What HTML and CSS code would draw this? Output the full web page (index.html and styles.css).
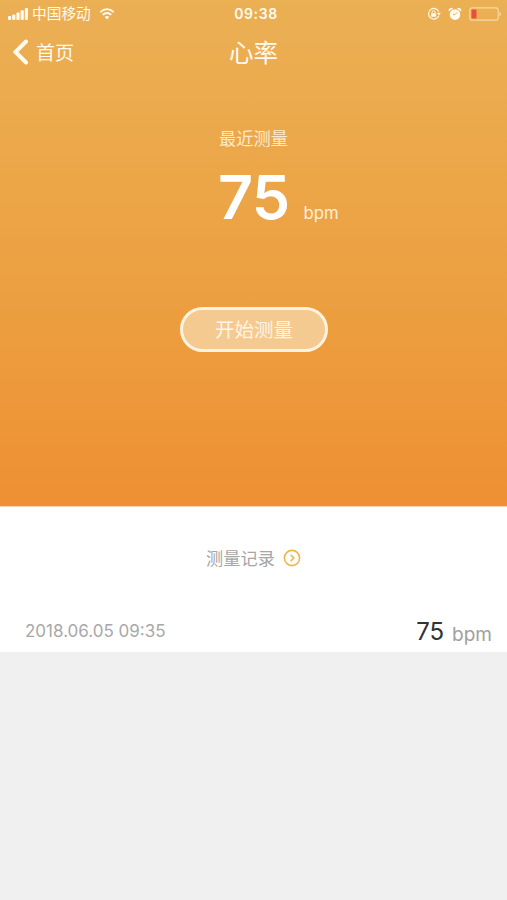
FILE: index.html
```html
<!DOCTYPE html>
<html lang="zh-CN">
<head>
<meta charset="utf-8">
<meta name="viewport" content="width=device-width, initial-scale=1">
<title>心率</title>
<link rel="stylesheet" href="styles.css">
</head>
<body>
<section class="hero">
  <div class="status">
    <div class="status-left">
      <svg class="signal" width="20" height="12" viewBox="0 0 20 12" fill="currentColor"><rect x="0" y="8" width="3.2" height="4" rx="1"/><rect x="4.2" y="6.5" width="3.2" height="5.5" rx="1"/><rect x="8.4" y="4.5" width="3.2" height="7.5" rx="1"/><rect x="12.6" y="2.2" width="3.2" height="9.8" rx="1"/><rect x="16.8" y="0" width="3.2" height="12" rx="1"/></svg>
      <span class="carrier">中国移动</span>
      <svg class="wifi" width="16" height="12" viewBox="0 0 16 12" fill="none" stroke="currentColor"><path d="M1.2 4.1Q8-1.8 14.8 4.1" stroke-width="1.7"/><path d="M3.7 6.8Q8 3.1 12.3 6.8" stroke-width="1.8"/><path d="M5.7 9Q8 7.1 10.3 9L8 11.4Z" fill="currentColor" stroke="none"/></svg>
    </div>
    <span class="clock">09:38</span>
    <div class="status-right">
      <svg width="14" height="14" viewBox="0 0 14 14" fill="none" stroke="currentColor"><path d="M11.8 8.7A5.3 5.3 0 1 1 11.7 4.6" stroke-width="1.2"/><path d="M9.8 5.8h4L12 8.4z" fill="currentColor" stroke="none"/><rect x="4.1" y="6.2" width="5" height="3.6" rx=".5" fill="currentColor" stroke="none"/><path d="M5.1 6.3V5.2a1.5 1.5 0 0 1 3 0v1.1"/></svg>
      <svg width="14" height="14" viewBox="0 0 14 14" fill="none"><path d="M1.3 4A2.5 2.5 0 0 1 4.6 1.7M9.4 1.7A2.5 2.5 0 0 1 12.7 4" stroke="currentColor" stroke-width="1.7"/><circle cx="7" cy="7.6" r="5.3" fill="currentColor"/><path d="M9.2 5.4L7 7.6H5" stroke="#eaad52"/></svg>
      <svg class="battery" width="33" height="14" viewBox="0 0 33 14"><rect x=".8" y=".8" width="28.4" height="12.4" rx="2.5" fill="none" stroke="#f8d7a4" stroke-width="1.2"/><rect x="2.5" y="2.5" width="5" height="9" fill="#e9503b"/><path d="M30.4 4.7q1.7.7 1.7 2.3t-1.7 2.3z" fill="#f8d7a4"/></svg>
    </div>
  </div>
  <nav class="nav">
    <div class="back">
      <svg width="17" height="26" viewBox="0 0 17 26" fill="none" stroke="currentColor" stroke-width="4" stroke-linecap="round"><path d="M14 2.5L3.5 13L14 23.5"/></svg>
      <span>首页</span>
    </div>
    <h1 class="title">心率</h1>
  </nav>
  <p class="label">最近测量</p>
  <div class="reading"><span class="value">75</span><span class="unit">bpm</span></div>
  <button class="start">开始测量</button>
</section>
<section class="records">
  <div class="records-head">
    <span>测量记录</span>
    <svg width="18" height="18" viewBox="0 0 18 18" fill="none" stroke="#efb64f" stroke-width="1.6"><circle cx="9" cy="9" r="7.6"/><path d="M7.7 5.9L10.8 9L7.7 12.1"/></svg>
  </div>
  <div class="record">
    <span class="date">2018.06.05 09:35</span>
    <span class="bpm">75</span>
    <span class="bpm-unit">bpm</span>
  </div>
</section>
</body>
</html>
```

FILE: styles.css
```css
* { box-sizing: border-box; }
body {
  margin: 0;
  min-height: 900px;
  background: #f0f0f0;
  font-family: Inter, "Noto Sans CJK SC", sans-serif;
}
svg { display: block; flex: none; }
.hero {
  height: 507px;
  background: linear-gradient(#ebb054, #ec9f40 60%, #ee9033);
  border-bottom: 1px solid #f8d9b4;
  color: #fffaf0;
  display: flex;
  flex-direction: column;
  align-items: center;
}
.status {
  width: 100%;
  height: 28px;
  padding: 0 5px 0 8px;
  display: grid;
  grid-template-columns: 1fr auto 1fr;
  align-items: center;
}
.status-left, .status-right { display: flex; align-items: center; }
.status-right { justify-content: flex-end; gap: 7px; }
.carrier { font-size: 14.7px; line-height: 28px; margin: 0 8px 0 4px; }
.clock { font-size: 14px; font-weight: 600; letter-spacing: .6px; line-height: 28px; padding-left: 2px; }
.nav {
  width: 100%;
  height: 48px;
  padding: 0 12px;
  display: grid;
  grid-template-columns: 1fr auto 1fr;
  align-items: center;
}
.back { display: flex; align-items: center; gap: 7px; font-size: 19px; line-height: 28px; }
.back span { padding-top: 3px; }
.title { margin: 0; padding-top: 2px; font-size: 24.5px; font-weight: 400; line-height: 36px; }
.label { margin: 50px 0 0; font-size: 17.2px; line-height: 26px; color: #fdeacb; }
.reading {
  height: 72px;
  margin: 9px 0 0 218px;
  align-self: flex-start;
  display: flex;
  align-items: baseline;
  color: #fff;
}
.value { font-size: 61px; font-weight: 600; line-height: 72px; letter-spacing: -.7px; }
.unit { font-size: 16.7px; margin-left: 14px; line-height: 20px; color: #fff0d9; }
.start {
  width: 148px;
  height: 45px;
  margin-top: 74px;
  padding: 2px 0 0 1px;
  border: 3px solid #fff3e0;
  border-radius: 23px;
  background: #f4ca90;
  color: #fff5e5;
  font: 19.5px/37px Inter, "Noto Sans CJK SC", sans-serif;
}
.records { height: 145px; background: #fff; }
.records-head {
  height: 102px;
  display: flex;
  align-items: center;
  justify-content: center;
  gap: 8px;
  font-size: 17.2px;
  color: #a6a6a6;
}
.records-head span { padding-bottom: 2px; }
.record {
  height: 43px;
  padding: 0 15px 0 25px;
  display: flex;
  align-items: flex-start;
}
.date { flex: 1; font-size: 17px; line-height: 45px; color: #a8a8a8; }
.bpm { font-size: 24px; line-height: 46px; color: #333; }
.bpm-unit { margin-left: 8px; font-size: 19px; line-height: 51px; color: #a0a0a0; }
```
